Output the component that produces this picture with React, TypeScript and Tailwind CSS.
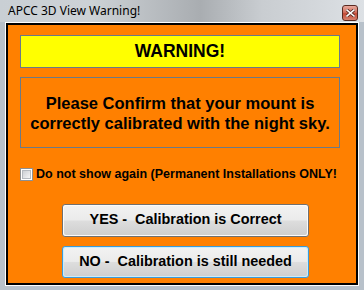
import React from "react";

function CloseButton() {
  return (
    <div className="absolute right-[6px] top-[5px] w-[16px] h-[16px] rounded-[3px] border border-[#5a2a22] bg-[linear-gradient(to_bottom,#e8a99c,#d2705f_45%,#c24a36_55%,#d6826f)] flex items-center justify-center">
      <svg width="9" height="8" viewBox="0 0 9 8">
        <path d="M1 1 L8 7 M8 1 L1 7" stroke="#5a2a22" strokeWidth="3.2" strokeLinecap="square" />
        <path d="M1 1 L8 7 M8 1 L1 7" stroke="#ffffff" strokeWidth="1.6" strokeLinecap="square" />
      </svg>
    </div>
  );
}

function Checkbox() {
  return (
    <div className="w-[13px] h-[13px] border border-[#8e9092] bg-white p-[1px]">
      <div className="w-full h-full border border-[#b4b9bf] bg-[linear-gradient(135deg,#cdd0d4,#f4f5f6)]" />
    </div>
  );
}

function WinButton({ label, focused }: { label: string; focused?: boolean }) {
  return (
    <div
      className={
        focused
          ? "w-[247px] h-[32px] rounded-[3px] border border-[#3c9ad8] p-[1px] bg-[#c9ecfc]"
          : "w-[247px] h-[33px] rounded-[3px] border border-[#707070] p-[1px] bg-[#fbfbfb]"
      }
    >
      <div className="w-full h-full rounded-[2px] bg-[linear-gradient(to_bottom,#f2f2f2_0%,#ebebeb_48%,#dddddd_52%,#cfcfcf_100%)] flex items-center justify-center text-[14.4px] font-bold text-black whitespace-pre">
        {label}
      </div>
    </div>
  );
}

export default function App() {
  return (
    <div
      className="w-[364px] h-[290px] bg-[#b8c1ca] relative overflow-hidden"
      style={{ fontFamily: '"Liberation Sans", Arial, sans-serif' }}
    >
      <div className="h-[22px] relative bg-[linear-gradient(to_right,#c9cfd4,#cdd2d6_25%,#a9adb1_55%,#c9cdd1_72%,#dde1e5)]">
        <div
          className="absolute left-[8px] top-[3px] text-[12px] leading-[16px] text-black"
          style={{ fontFamily: '"Noto Sans", "Open Sans", sans-serif' }}
        >
          APCC 3D View Warning!
        </div>
        <CloseButton />
      </div>
      <div className="mx-[5px] h-[264px] border border-white">
        <div className="h-full border-2 border-black bg-[#ff8000] flex flex-col">
          <div className="ml-[12px] mt-[10px] w-[320px] h-[33px] bg-[#ffff00] border border-[#6b7a88] flex items-center justify-center text-[17.5px] font-bold text-black">
            WARNING!
          </div>
          <div className="ml-[12px] mt-[9px] w-[320px] h-[71px] border border-[#6b7a88] flex items-center justify-center text-center text-[16.5px] leading-[20px] font-bold text-black">
            <div>
              Please Confirm that your mount is
              <br />
              correctly calibrated with the night sky.
            </div>
          </div>
          <div className="ml-[12px] mt-[17px] flex items-center gap-[3px]">
            <Checkbox />
            <span className="text-[12.5px] font-bold text-black">
              Do not show again (Permanent Installations ONLY!
            </span>
          </div>
          <div className="ml-[54px] mt-[20px] flex flex-col gap-[9px]">
            <WinButton label="YES -  Calibration is Correct" />
            <WinButton label="NO -  Calibration is still needed" focused />
          </div>
        </div>
      </div>
    </div>
  );
}
